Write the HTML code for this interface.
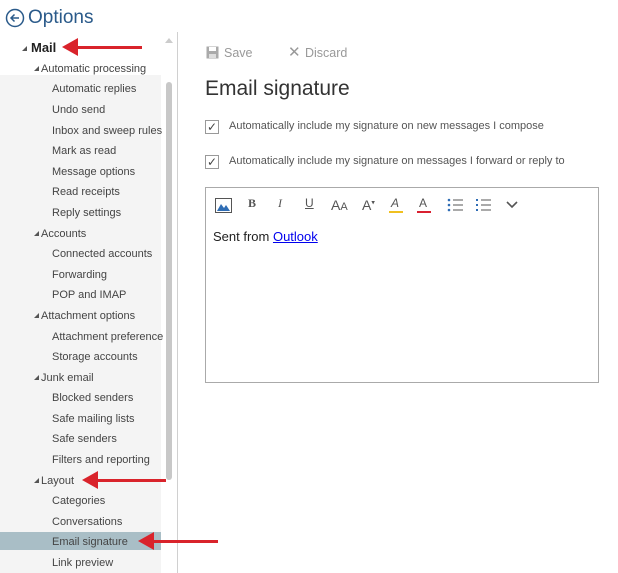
<!DOCTYPE html>
<html><head><style>
body{margin:0;width:618px;height:573px;background:#fff;font-family:"Liberation Sans",sans-serif;position:relative;overflow:hidden;color:#333}
.a{position:absolute;white-space:nowrap}
.side{position:absolute;left:0;top:75px;width:161px;height:498px;background:#f4f4f4}
.it{position:absolute;font-size:11px;color:#444;line-height:14px;margin-top:1px}
.tri{position:absolute;width:0;height:0;border-left:5px solid transparent;border-bottom:5px solid #555;margin-top:1px}
.arrow{position:absolute;height:3px;background:#d9232b}
.arrow:before{content:"";position:absolute;left:-14px;top:-8px;border-right:16px solid #d9232b;border-top:9px solid transparent;border-bottom:9px solid transparent}
.tb{position:absolute;top:196px;font-size:12px;color:#555}
</style></head><body>
<div class="side"></div>
<div class="a" style="left:0;top:532px;width:161px;height:18px;background:#a9bec6"></div>
<div class="a" style="left:166px;top:82px;width:6px;height:398px;background:#c8c8c8;border-radius:3px"></div>
<div class="a" style="left:165px;top:38px;border-left:4px solid transparent;border-right:4px solid transparent;border-bottom:5px solid #ccc"></div>
<div class="a" style="left:177px;top:32px;width:1px;height:541px;background:#d0d0d0"></div>
<svg class="a" style="left:5px;top:8px" width="20" height="20"><circle cx="10" cy="10" r="8.5" fill="none" stroke="#2a5a8a" stroke-width="1.5"/><path d="M14 10H6M9.5 6.5L6 10l3.5 3.5" fill="none" stroke="#2a5a8a" stroke-width="1.5"/></svg>
<div class="a" style="left:28px;top:7px;font-size:19px;color:#2a5a8a">Options</div>
<div class="tri" style="left:22px;top:45px"></div>
<div class="it" style="left:31px;top:40px;font-size:13px;font-weight:bold;color:#222">Mail</div>
<div class="tri" style="left:34px;top:65px"></div><div class="it" style="left:41px;top:61px">Automatic processing</div>
<div class="it" style="left:52px;top:81px">Automatic replies</div>
<div class="it" style="left:52px;top:102px">Undo send</div>
<div class="it" style="left:52px;top:123px">Inbox and sweep rules</div>
<div class="it" style="left:52px;top:143px">Mark as read</div>
<div class="it" style="left:52px;top:164px">Message options</div>
<div class="it" style="left:52px;top:184px">Read receipts</div>
<div class="it" style="left:52px;top:205px">Reply settings</div>
<div class="tri" style="left:34px;top:230px"></div><div class="it" style="left:41px;top:226px">Accounts</div>
<div class="it" style="left:52px;top:246px">Connected accounts</div>
<div class="it" style="left:52px;top:267px">Forwarding</div>
<div class="it" style="left:52px;top:287px">POP and IMAP</div>
<div class="tri" style="left:34px;top:312px"></div><div class="it" style="left:41px;top:308px">Attachment options</div>
<div class="it" style="left:52px;top:329px">Attachment preference</div>
<div class="it" style="left:52px;top:349px">Storage accounts</div>
<div class="tri" style="left:34px;top:374px"></div><div class="it" style="left:41px;top:370px">Junk email</div>
<div class="it" style="left:52px;top:390px">Blocked senders</div>
<div class="it" style="left:52px;top:411px">Safe mailing lists</div>
<div class="it" style="left:52px;top:431px">Safe senders</div>
<div class="it" style="left:52px;top:452px">Filters and reporting</div>
<div class="tri" style="left:34px;top:477px"></div><div class="it" style="left:41px;top:473px">Layout</div>
<div class="it" style="left:52px;top:493px">Categories</div>
<div class="it" style="left:52px;top:514px">Conversations</div>
<div class="it" style="left:52px;top:534px">Email signature</div>
<div class="it" style="left:52px;top:555px">Link preview</div>
<div class="arrow" style="left:76px;top:46px;width:66px"></div>
<div class="arrow" style="left:96px;top:479px;width:70px"></div>
<div class="arrow" style="left:152px;top:540px;width:66px"></div>
<svg class="a" style="left:206px;top:46px" width="13" height="13"><rect x="0.5" y="0.5" width="12" height="12" fill="#aaa"/><rect x="3" y="1" width="7" height="4" fill="#fff"/><rect x="3" y="8" width="7" height="4" fill="#ddd"/></svg>
<div class="a" style="left:224px;top:46px;font-size:12.5px;color:#999">Save</div>
<div class="a" style="left:288px;top:43px;font-size:15px;color:#999">✕</div>
<div class="a" style="left:305px;top:46px;font-size:12.5px;color:#999">Discard</div>
<div class="a" style="left:205px;top:77px;font-size:21px;color:#333">Email signature</div>
<div class="a" style="left:205px;top:120px;width:12px;height:12px;border:1px solid #999;font-size:12px;line-height:12px;text-align:center;color:#444">✓</div>
<div class="a" style="left:229px;top:120px;font-size:11px;color:#555">Automatically include my signature on new messages I compose</div>
<div class="a" style="left:205px;top:155px;width:12px;height:12px;border:1px solid #999;font-size:12px;line-height:12px;text-align:center;color:#444">✓</div>
<div class="a" style="left:229px;top:155px;font-size:11px;color:#555">Automatically include my signature on messages I forward or reply to</div>
<div class="a" style="left:205px;top:187px;width:392px;height:194px;border:1px solid #aaa"></div>
<svg class="a" style="left:215px;top:198px" width="17" height="15"><rect x="0.5" y="0.5" width="16" height="14" fill="none" stroke="#555"/><path d="M2 13L6 6l3 4 2-3 4 6z" fill="#2f6db5"/></svg>
<div class="tb" style="left:248px;font-family:'Liberation Serif',serif;font-weight:bold">B</div>
<div class="tb" style="left:278px;font-family:'Liberation Serif',serif;font-style:italic">I</div>
<div class="tb" style="left:305px;text-decoration:underline">U</div>
<div class="tb" style="left:331px;top:197px;font-size:14px">A<span style="font-size:11px">A</span></div>
<div class="tb" style="left:362px;top:197px;font-size:14px">A<sup style="font-size:7px">▾</sup></div>
<div class="tb" style="left:391px;font-style:italic">A</div><div class="a" style="left:389px;top:211px;width:14px;height:2px;background:#f0c020"></div>
<div class="tb" style="left:419px">A</div><div class="a" style="left:417px;top:211px;width:14px;height:2px;background:#d92030"></div>
<svg class="a" style="left:447px;top:198px" width="16" height="14"><g fill="#2f6db5"><circle cx="2" cy="2" r="1.3"/><circle cx="2" cy="7" r="1.3"/><circle cx="2" cy="12" r="1.3"/></g><g stroke="#555"><path d="M6 2h10M6 7h10M6 12h10"/></g></svg>
<svg class="a" style="left:475px;top:198px" width="16" height="14"><g fill="#2f6db5"><rect x="1" y="1" width="2" height="2"/><rect x="1" y="6" width="2" height="2"/><rect x="1" y="11" width="2" height="2"/></g><g stroke="#555"><path d="M6 2h10M6 7h10M6 12h10"/></g></svg>
<svg class="a" style="left:506px;top:201px" width="12" height="8"><path d="M1 1l5 5 5-5" fill="none" stroke="#555" stroke-width="1.6"/></svg>
<div class="a" style="left:213px;top:229px;font-size:13px;color:#222">Sent from <span style="color:#0000ee;text-decoration:underline">Outlook</span></div>
</body></html>
